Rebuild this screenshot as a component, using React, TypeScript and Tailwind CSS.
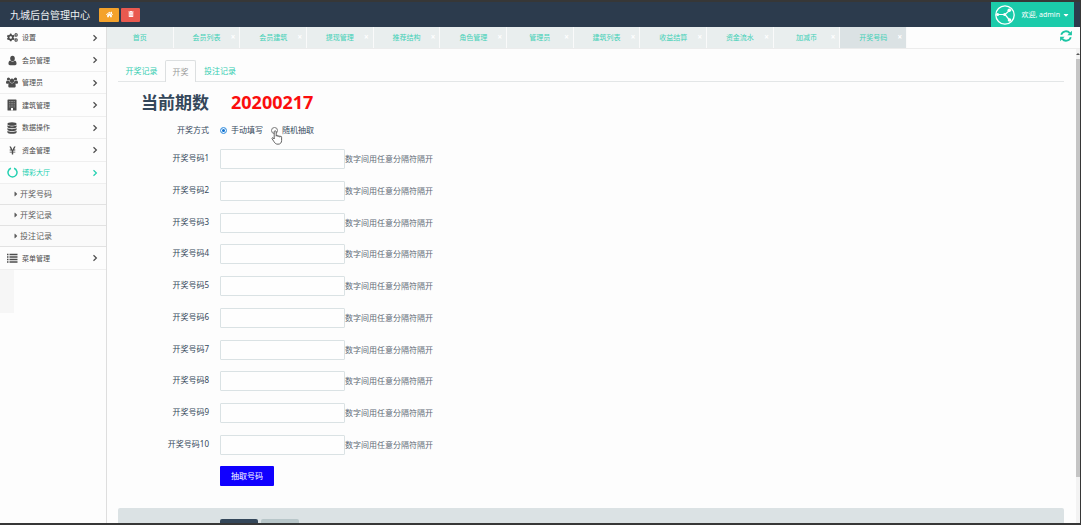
import { useState } from 'react'
import type { ComponentType } from 'react'
import { FaCaretDown, FaCaretRight, FaCogs, FaHome, FaTrashAlt, FaYenSign } from 'react-icons/fa'

function UserIcon() {
  return (
    <svg viewBox="0 0 12 12" className="h-[11px] w-[11px]" fill="currentColor" aria-hidden>
      <ellipse cx="6" cy="3.7" rx="2.5" ry="3" />
      <path d="M3.4 6C2 6.3 1.6 8 1.6 9.6c0 1 .7 1.6 1.6 1.6h5.6c.9 0 1.6-.6 1.6-1.6C10.400 8 10 6.300 8.600 6 7.900 6.800 7 7.300 6 7.300S4.100 6.800 3.400 6Z" />
    </svg>
  )
}

function UsersIcon() {
  return (
    <svg viewBox="0 0 12 11" className="h-[11px] w-3" fill="currentColor" aria-hidden>
      <circle cx="2.5" cy="2" r="1.600" />
      <circle cx="9.500" cy="2" r="1.600" />
      <circle cx="6" cy="3.700" r="2.200" />
      <path d="M1.200 3.600C.4 3.800 0 4.800 0 6c0 .5.4.8 1 .8h2.200C3.700 6 4.200 5.700 4 5 3.600 4.600 3.500 4.100 3.500 3.700 2.600 4.100 1.900 4.100 1.200 3.600ZM10.800 3.600C11.600 3.800 12 4.800 12 6c0 .5-.4.8-1 .8H8.800C8.300 6 7.800 5.700 8 5c.4-.4.5-.9.5-1.300.9.4 1.600.4 2.300-.1Z" />
      <path d="M4 5.600C2.600 5.900 2.300 7.300 2.300 9c0 1 .6 1.500 1.500 1.500h4.400c.9 0 1.500-.5 1.500-1.500 0-1.700-.3-3.100-1.700-3.400-1.200 1.100-2.800 1.100-4 0Z" />
    </svg>
  )
}

function BuildingIcon() {
  return (
    <svg viewBox="0 0 10 12" className="h-3 w-2.5" aria-hidden>
      <rect x="0.500" y="0.500" width="9" height="11" rx="0.600" fill="currentColor" />
      <path
        d="M2.200 2.500h5.600M2.200 4.300h5.600M2.200 6.100h5.600M2.200 7.900h5.600"
        stroke="#bbb"
        strokeWidth="0.700"
        strokeDasharray="1 0.530"
      />
      <rect x="4" y="9" width="2" height="2.500" fill="white" />
    </svg>
  )
}

function DatabaseIcon() {
  return (
    <svg viewBox="0 0 10 12" className="h-3 w-2.5" fill="currentColor" aria-hidden>
      <ellipse cx="5" cy="2" rx="4.600" ry="1.800" />
      <path d="M.4 3.300c1 1.500 8.200 1.500 9.200 0v1.500c0 2-9.200 2-9.200 0ZM.4 6c1 1.500 8.200 1.500 9.200 0v1.500c0 2-9.200 2-9.200 0ZM.4 8.700c1 1.500 8.200 1.500 9.200 0v1.500c0 2-9.200 2-9.200 0Z" />
    </svg>
  )
}

function YenIcon() {
  return <FaYenSign className="text-[9px]" />
}

function CircleIcon() {
  return (
    <svg viewBox="0 0 12 12" className="h-[11px] w-[11px]" fill="none" stroke="currentColor" aria-hidden>
      <path d="M7.700 1.400a4.900 4.900 0 1 1-3.400 0" strokeWidth="1.600" />
    </svg>
  )
}

function ListIcon() {
  return (
    <svg viewBox="0 0 12 10" className="h-2.5 w-3" stroke="currentColor" aria-hidden>
      <path d="M1 1.500h1.500M1 4h1.500M1 6.500h1.500M1 9h1.500M3.500 1.500h8M3.500 4h8M3.500 6.500h8M3.500 9h8" strokeWidth="1.400" />
    </svg>
  )
}

function AngleIcon() {
  return (
    <svg viewBox="0 0 6 8" className="h-2 w-1.5" fill="none" stroke="currentColor" aria-hidden>
      <path d="M1.500 1.200 4.400 4 1.500 6.800" strokeWidth="1.200" />
    </svg>
  )
}

function RefreshIcon() {
  return (
    <svg viewBox="0 0 12 12" className="h-3 w-3" aria-hidden>
      <g fill="none" stroke="currentColor" strokeWidth="1.800">
        <path d="M1.200 4.800C2.600.7 7.500.200 9.700 3.100" />
        <path d="M10.800 7.200C9.400 11.300 4.500 11.800 2.300 8.900" />
      </g>
      <path d="M11.900.700v4.500H7.400ZM.1 11.300V6.800h4.500Z" fill="currentColor" />
    </svg>
  )
}

function Avatar() {
  return (
    <svg viewBox="0 0 20 20" className="h-5 w-5" fill="none" stroke="white" aria-hidden>
      <circle cx="10" cy="10" r="9.200" strokeWidth="1.300" />
      <path d="M1.500 9.500H10L14.500 5.500M10 9.500l4.500 5.500" strokeWidth="1.200" />
      <g fill="white" stroke="none">
        <circle cx="2.600" cy="9.500" r="1.500" />
        <circle cx="9.600" cy="9.500" r="1.500" />
        <circle cx="14.300" cy="5.300" r="1.800" />
        <circle cx="14.500" cy="15" r="1.800" />
      </g>
    </svg>
  )
}

function HandPointer() {
  return (
    <svg viewBox="0 0 12 15" className="absolute top-1 left-0 z-10 h-[15px] w-3" aria-hidden>
      <path
        d="M3.200 9V1.800a1 1 0 0 1 2 0V6.200a.9.9 0 0 1 1.800 0v.5a.9.9 0 0 1 1.800 0v.5a.9.9 0 0 1 1.800 0V10.500c0 2.300-1.300 3.700-3.600 3.700-2 0-2.900-.8-3.900-2.400L1.100 8.800c-.5-1 .7-1.600 1.300-.8Z"
        fill="white"
        stroke="#555"
        strokeWidth="0.900"
        strokeLinejoin="round"
      />
    </svg>
  )
}

type MenuItem = {
  label: string
  icon: ComponentType
  active?: boolean
  children?: string[]
}

const menu: MenuItem[] = [
  { label: '设置', icon: FaCogs },
  { label: '会员管理', icon: UserIcon },
  { label: '管理员', icon: UsersIcon },
  { label: '建筑管理', icon: BuildingIcon },
  { label: '数据操作', icon: DatabaseIcon },
  { label: '资金管理', icon: YenIcon },
  { label: '博彩大厅', icon: CircleIcon, active: true, children: ['开奖号码', '开奖记录', '投注记录'] },
  { label: '菜单管理', icon: ListIcon },
]

const openTabs = [
  '首页',
  '会员列表',
  '会员建筑',
  '提现管理',
  '推荐结构',
  '角色管理',
  '管理员',
  '建筑列表',
  '收益结算',
  '资金流水',
  '加减币',
  '开奖号码',
]

const numbers = [1, 2, 3, 4, 5, 6, 7, 8, 9, 10]

function Header() {
  return (
    <header className="flex h-[27px] shrink-0 items-stretch border-t-2 border-[#373737] bg-[#2c3b4d] pr-1.5">
      <h1 className="flex w-[99px] items-center pl-2.5 text-[10px] text-[#eef1f3]">九城后台管理中心</h1>
      <div className="flex flex-1 items-center gap-0.5">
        <button
          type="button"
          aria-label="首页"
          className="flex h-[14px] w-5 items-center justify-center rounded-[1px] bg-[#f4a22b] pb-px text-[7px] text-white"
        >
          <FaHome />
        </button>
        <button
          type="button"
          aria-label="清除缓存"
          className="flex h-[14px] w-[19px] items-center justify-center rounded-[1px] bg-[#e9594f] pb-px text-[6px] text-white"
        >
          <FaTrashAlt />
        </button>
      </div>
      <button type="button" className="flex items-center bg-[#1bcbaa] px-1 text-[7px] text-white">
        <Avatar />
        <span className="ml-1.5">欢迎, admin</span>
        <FaCaretDown className="ml-0.5 text-[8px]" />
      </button>
    </header>
  )
}

function Sidebar() {
  return (
    <nav className="w-[107px] shrink-0 border-r border-[#dedede] bg-[#fdfdfd]">
      <ul>
        {menu.map(({ label, icon: Icon, active, children }) => (
          <li key={label} className="group">
            <a
              href="#"
              className={`flex h-[22px] items-center border-b border-[#efefef] pr-2 pl-1.5 text-[7px] group-even:h-[23px] ${
                active ? 'text-[#22d0b0]' : 'text-[#4c4c4c]'
              }`}
            >
              <span className="flex w-3 justify-center text-[11px]">
                <Icon />
              </span>
              <span className="ml-1 flex-1">{label}</span>
              <AngleIcon />
            </a>
            {children && (
              <ul className="bg-[#fafafa]">
                {children.map((child) => (
                  <li key={child}>
                    <a
                      href="#"
                      className="flex h-[21px] items-center border-b border-[#e2e2e2] pl-3.5 text-[8px] text-[#5c5c5c]"
                    >
                      <FaCaretRight className="w-1 text-[8px]" />
                      <span className="ml-0.5">{child}</span>
                    </a>
                  </li>
                ))}
              </ul>
            )}
          </li>
        ))}
      </ul>
      <div className="h-[43px] w-3.5 bg-[#f6f6f6]" />
    </nav>
  )
}

function TabBar() {
  return (
    <div className="flex h-[22px] shrink-0 items-stretch justify-between border-b border-[#ececec] pr-2">
      <ul className="flex w-[800px]">
        {openTabs.map((tab, i) => (
          <li
            key={tab}
            className={`relative flex flex-1 items-center justify-center border-r border-[#fafafa] ${
              i === openTabs.length - 1 ? 'bg-[#dbe2e4]' : 'bg-[#e9eeee]'
            }`}
          >
            <a href="#" className="text-[7px] text-[#3fd0b6]">
              {tab}
            </a>
            {i > 0 && (
              <button
                type="button"
                aria-label={`关闭${tab}`}
                className="absolute top-1.5 right-1 text-[8px] leading-[8px] font-bold text-white"
              >
                ×
              </button>
            )}
          </li>
        ))}
      </ul>
      <button type="button" aria-label="刷新" className="flex items-center pb-1 text-[#1cc5a4]">
        <RefreshIcon />
      </button>
    </div>
  )
}

const radioClass =
  'h-[7px] w-[7px] appearance-none rounded-full border border-[#777] bg-white checked:border-[#5aa5e6] checked:bg-[#0b6fd0] checked:shadow-[inset_0_0_0_1px_white]'

function DrawForm() {
  const [mode, setMode] = useState('manual')

  return (
    <form className="text-[8px] text-[#34475a]">
      <div className="flex h-10 items-center font-bold">
        <span className="w-[91px] text-right text-[17px]">当前期数</span>
        <span className="ml-[22px] text-[18px] text-[#fb0d0d]">20200217</span>
      </div>

      <div role="radiogroup" aria-labelledby="mode-label" className="flex h-4 items-center">
        <span id="mode-label" className="w-[91px] text-right">
          开奖方式
        </span>
        <label className="ml-[11px] flex items-center gap-1">
          <input
            type="radio"
            name="mode"
            checked={mode === 'manual'}
            onChange={() => setMode('manual')}
            className={radioClass}
          />
          手动填写
        </label>
        <label className="relative ml-2 flex items-center gap-1">
          <input
            type="radio"
            name="mode"
            checked={mode === 'random'}
            onChange={() => setMode('random')}
            className={radioClass}
          />
          随机抽取
          <HandPointer />
        </label>
      </div>

      <div className="mt-[11px] flex h-[306px] flex-col justify-between">
        {numbers.map((n) => (
          <div key={n} className="flex h-5 items-center">
            <label htmlFor={`number-${n}`} className="w-[91px] pb-0.5 text-right">
              开奖号码{n}
            </label>
            <input
              id={`number-${n}`}
              type="text"
              className="ml-[11px] h-5 w-[125px] rounded-[1px] border border-[#dae2e4] bg-[#fefefe] px-1 outline-none"
            />
            <span className="text-[#5f6b76]">数字间用任意分隔符隔开</span>
          </div>
        ))}
      </div>

      <button
        type="button"
        className="mt-[11px] ml-[102px] h-5 w-[54px] rounded-[1px] bg-[#1000ff] text-white"
      >
        抽取号码
      </button>

      <div className="mt-[22px] flex gap-[3px] rounded-t-[2px] bg-[#dbe2e4] py-[11px] pl-[102px]">
        <button type="submit" aria-label="提交" className="h-5 w-[38px] rounded-[2px] bg-[#34475a]" />
        <button type="reset" aria-label="重置" className="h-5 w-[38px] rounded-[2px] bg-[#b8c6c9]" />
      </div>
    </form>
  )
}

function Content() {
  return (
    <div className="flex min-h-0 flex-1">
      <section className="min-w-0 flex-1 overflow-hidden pt-[11px] pr-3 pl-[11px]">
        <div className="flex h-[22px] border-b border-[#e3e6e7] text-[8px] text-[#33cdb1]">
          <a href="#" className="flex w-[47px] items-center justify-center">
            开奖记录
          </a>
          <a
            href="#"
            aria-current="page"
            className="-mb-px flex w-[31px] items-center justify-center rounded-t-[2px] border border-b-0 border-[#dcdfe0] bg-[#fdfdfd] text-[#999]"
          >
            开奖
          </a>
          <a href="#" className="flex w-[48px] items-center justify-center">
            投注记录
          </a>
        </div>
        <DrawForm />
      </section>
      <div className="flex w-1 shrink-0 flex-col items-center bg-[#f3f3f3] pt-1" aria-hidden>
        <span className="h-0 w-0 border-x-2 border-b-2 border-x-transparent border-b-[#555]" />
        <span className="mt-1 h-[89%] w-full bg-[#c5c5c5]" />
      </div>
    </div>
  )
}

export default function App() {
  return (
    <div className="flex h-screen flex-col overflow-hidden border-r border-b-2 border-[#373737] bg-[#fdfdfd] font-['Noto_Sans','Noto_Sans_CJK_SC',sans-serif] leading-none">
      <Header />
      <div className="flex min-h-0 flex-1">
        <Sidebar />
        <main className="flex min-w-0 flex-1 flex-col">
          <TabBar />
          <Content />
        </main>
      </div>
    </div>
  )
}
